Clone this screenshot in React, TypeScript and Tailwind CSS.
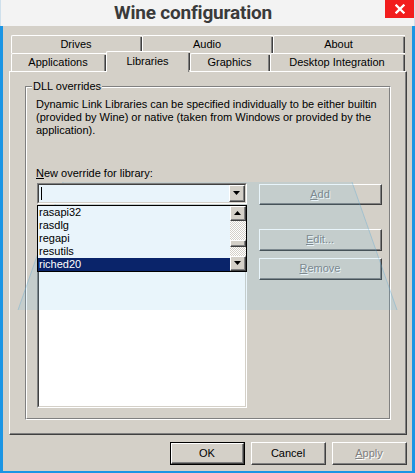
import React from "react";

type Children = { children?: React.ReactNode };

// Classic raised 3D frame (buttons)
function Raised({ className = "", children }: { className?: string } & Children) {
  return (
    <div
      className={`${className} bg-[#d4d0c8] border-t border-l border-t-white border-l-white border-r border-b border-r-[#404040] border-b-[#404040]`}
    >
      <div className="h-full w-full border-r border-b border-r-[#808080] border-b-[#808080] flex items-center justify-center">
        {children}
      </div>
    </div>
  );
}

function Disabled({ children }: Children) {
  return <span className="text-[#808080] [text-shadow:1px_1px_0_#ffffff]">{children}</span>;
}

function Arrow({ up = false }: { up?: boolean }) {
  return (
    <svg width="7" height="4" viewBox="0 0 7 4" className="block">
      <polygon points={up ? "0,4 7,4 3.5,0" : "0,0 7,0 3.5,4"} fill="#000" />
    </svg>
  );
}

function Tab({ w, label }: { w: string; label: string }) {
  return (
    <div className={`${w} h-[18px] flex bg-[#d4d0c8] border-t border-l border-white rounded-tl-[2px]`}>
      <div className="flex-1 flex items-center justify-center pb-[1px]">{label}</div>
      <div className="w-px bg-[#808080] mt-[1px]" />
      <div className="w-px bg-[#404040] mt-[1px]" />
    </div>
  );
}

const entries = ["rasapi32", "rasdlg", "regapi", "resutils", "riched20"];

export default function App() {
  return (
    <div className="relative w-[415px] h-[473px] overflow-hidden bg-[#d4d0c8] font-['Liberation_Sans',Arial,sans-serif] text-[11px] leading-[13px] text-black flex flex-col">
      {/* title bar */}
      <div className="h-[26px] shrink-0 flex bg-[#f3f3f3] border-l border-r border-[#cfe0ec]">
        <div className="flex-1 flex items-center justify-center pb-[1px] font-['Roboto',sans-serif] font-bold text-[19px] leading-[22px] tracking-[-0.2px] text-[#3a3a3a]">
          Wine configuration
        </div>
        <div className="w-[29px] h-[18px] bg-[#f21d1d] flex items-center justify-center">
          <svg width="10" height="10" viewBox="0 0 10 10">
            <path d="M1.5 1.5L8.5 8.5M8.5 1.5L1.5 8.5" stroke="#fff" strokeWidth="2.3" strokeLinecap="square" />
          </svg>
        </div>
      </div>

      {/* client area */}
      <div className="flex-1 flex flex-col border-l-[3px] border-r-[3px] border-b-[2px] border-[#1b95e4] pt-[9px] pl-[6px] pr-[5px]">
        {/* tab strip */}
        <div className="ml-[2px] flex flex-col">
          <div className="flex h-[18px]">
            <Tab w="w-[131px]" label="Drives" />
            <Tab w="w-[131px]" label="Audio" />
            <Tab w="w-[132px]" label="About" />
          </div>
          <div className="flex h-[18px] relative z-10">
            <Tab w="w-[95px]" label="Applications" />
            <div className="w-[84px] h-[21px] -mt-[2px] flex bg-[#d4d0c8] border-t border-l border-white rounded-tl-[2px]">
              <div className="flex-1 flex items-start justify-center pt-[3px]">Libraries</div>
              <div className="w-px bg-[#808080] mt-[1px]" />
              <div className="w-px bg-[#404040] mt-[1px] mb-[2px]" />
            </div>
            <Tab w="w-[80px]" label="Graphics" />
            <Tab w="w-[135px]" label="Desktop Integration" />
          </div>
        </div>

        {/* tab page */}
        <div className="w-[398px] h-[364px] border-t border-l border-white border-r border-b border-r-[#404040] border-b-[#404040]">
          <div className="h-full border-r border-b border-r-[#808080] border-b-[#808080] pt-[14px] pl-[15px]">
            {/* group box */}
            <div className="relative w-[366px] h-[334px] border-t border-l border-t-[#808080] border-l-[#808080] border-r border-b border-r-white border-b-white">
              <div className="h-full border-t border-l border-t-white border-l-white border-r border-b border-r-[#808080] border-b-[#808080] pt-[10px] pl-[9px] flex flex-col">
                <p>
                  Dynamic Link Libraries can be specified individually to be either builtin
                  <br />
                  (provided by Wine) or native (taken from Windows or provided by the
                  <br />
                  application).
                </p>
                <p className="mt-[30px]">
                  <span className="underline">N</span>ew override for library:
                </p>
                <div className="mt-[3px] flex gap-[12px]">
                  {/* left column: combo + overrides list */}
                  <div className="relative w-[210px] ml-px flex flex-col">
                    <div className="relative z-10 h-[21px] border-t border-l border-t-[#808080] border-l-[#808080] border-r border-b border-r-white border-b-white">
                      <div className="h-full flex bg-[#e9f4fb] border-t border-l border-t-[#404040] border-l-[#404040] border-r border-b border-r-[#d4d0c8] border-b-[#d4d0c8]">
                        <div className="flex-1 flex items-center pl-[2px]">
                          <div className="w-px h-[13px] bg-black" />
                        </div>
                        <Raised className="w-[16px] h-full">
                          <Arrow />
                        </Raised>
                      </div>
                    </div>
                    <div className="mt-[9px] h-[195px] border-t border-l border-t-[#808080] border-l-[#808080] border-r border-b border-r-white border-b-white">
                      <div className="h-full bg-white border-t border-l border-t-[#404040] border-l-[#404040] border-r border-b border-r-[#d4d0c8] border-b-[#d4d0c8]" />
                    </div>

                    {/* open dropdown */}
                    <div className="absolute z-10 left-0 top-[22px] w-[210px] h-[67px] border border-black bg-[#e9f4fb] flex">
                      <div className="flex-1 flex flex-col">
                        {entries.map((name) => (
                          <div
                            key={name}
                            className={`h-[13px] pl-px leading-[13px] ${name === "riched20" ? "bg-[#0a246a] text-white" : ""}`}
                          >
                            {name}
                          </div>
                        ))}
                      </div>
                      <div className="w-[16px] flex flex-col">
                        <Raised className="w-[16px] h-[15px]">
                          <Arrow up />
                        </Raised>
                        <div className="h-[19px] bg-[repeating-conic-gradient(#d4d0c8_0_25%,#ffffff_0_50%)] bg-[length:2px_2px]" />
                        <Raised className="w-[16px] h-[7px]" />
                        <div className="h-[9px] bg-[repeating-conic-gradient(#d4d0c8_0_25%,#ffffff_0_50%)] bg-[length:2px_2px]" />
                        <Raised className="w-[16px] h-[15px]">
                          <Arrow />
                        </Raised>
                      </div>
                    </div>
                  </div>

                  {/* right column: actions */}
                  <div className="w-[123px] flex flex-col">
                    <Raised className="mt-px w-[123px] h-[21px]">
                      <Disabled>
                        <span className="underline">A</span>dd
                      </Disabled>
                    </Raised>
                    <Raised className="mt-[24px] w-[123px] h-[22px]">
                      <Disabled>
                        <span className="underline">E</span>dit...
                      </Disabled>
                    </Raised>
                    <Raised className="mt-[7px] w-[123px] h-[22px]">
                      <Disabled>
                        <span className="underline">R</span>emove
                      </Disabled>
                    </Raised>
                  </div>
                </div>
              </div>
              <span className="absolute left-[6px] -top-[7px] bg-[#d4d0c8] px-px leading-[13px]">DLL overrides</span>
            </div>
          </div>
        </div>

        {/* dialog buttons */}
        <div className="mt-[7px] flex justify-end gap-[6px]">
          <div className="w-[75px] h-[23px] border border-black">
            <Raised className="w-full h-full">OK</Raised>
          </div>
          <Raised className="w-[75px] h-[23px]">Cancel</Raised>
          <Raised className="w-[75px] h-[23px]">
            <Disabled>
              <span className="underline">A</span>pply
            </Disabled>
          </Raised>
        </div>
      </div>

      {/* translucent reflection across the dialog */}
      <svg
        className="absolute left-0 top-[182px] z-[5] pointer-events-none"
        width="415"
        height="128"
        viewBox="0 0 415 128"
      >
        <polygon points="63,0 352,0 397,128 18,128" fill="rgba(110,185,225,0.15)" />
        <line x1="63" y1="0" x2="18" y2="128" stroke="rgba(90,170,215,0.35)" strokeWidth="1" />
        <line x1="352" y1="0" x2="397" y2="128" stroke="rgba(90,170,215,0.35)" strokeWidth="1" />
      </svg>
    </div>
  );
}
